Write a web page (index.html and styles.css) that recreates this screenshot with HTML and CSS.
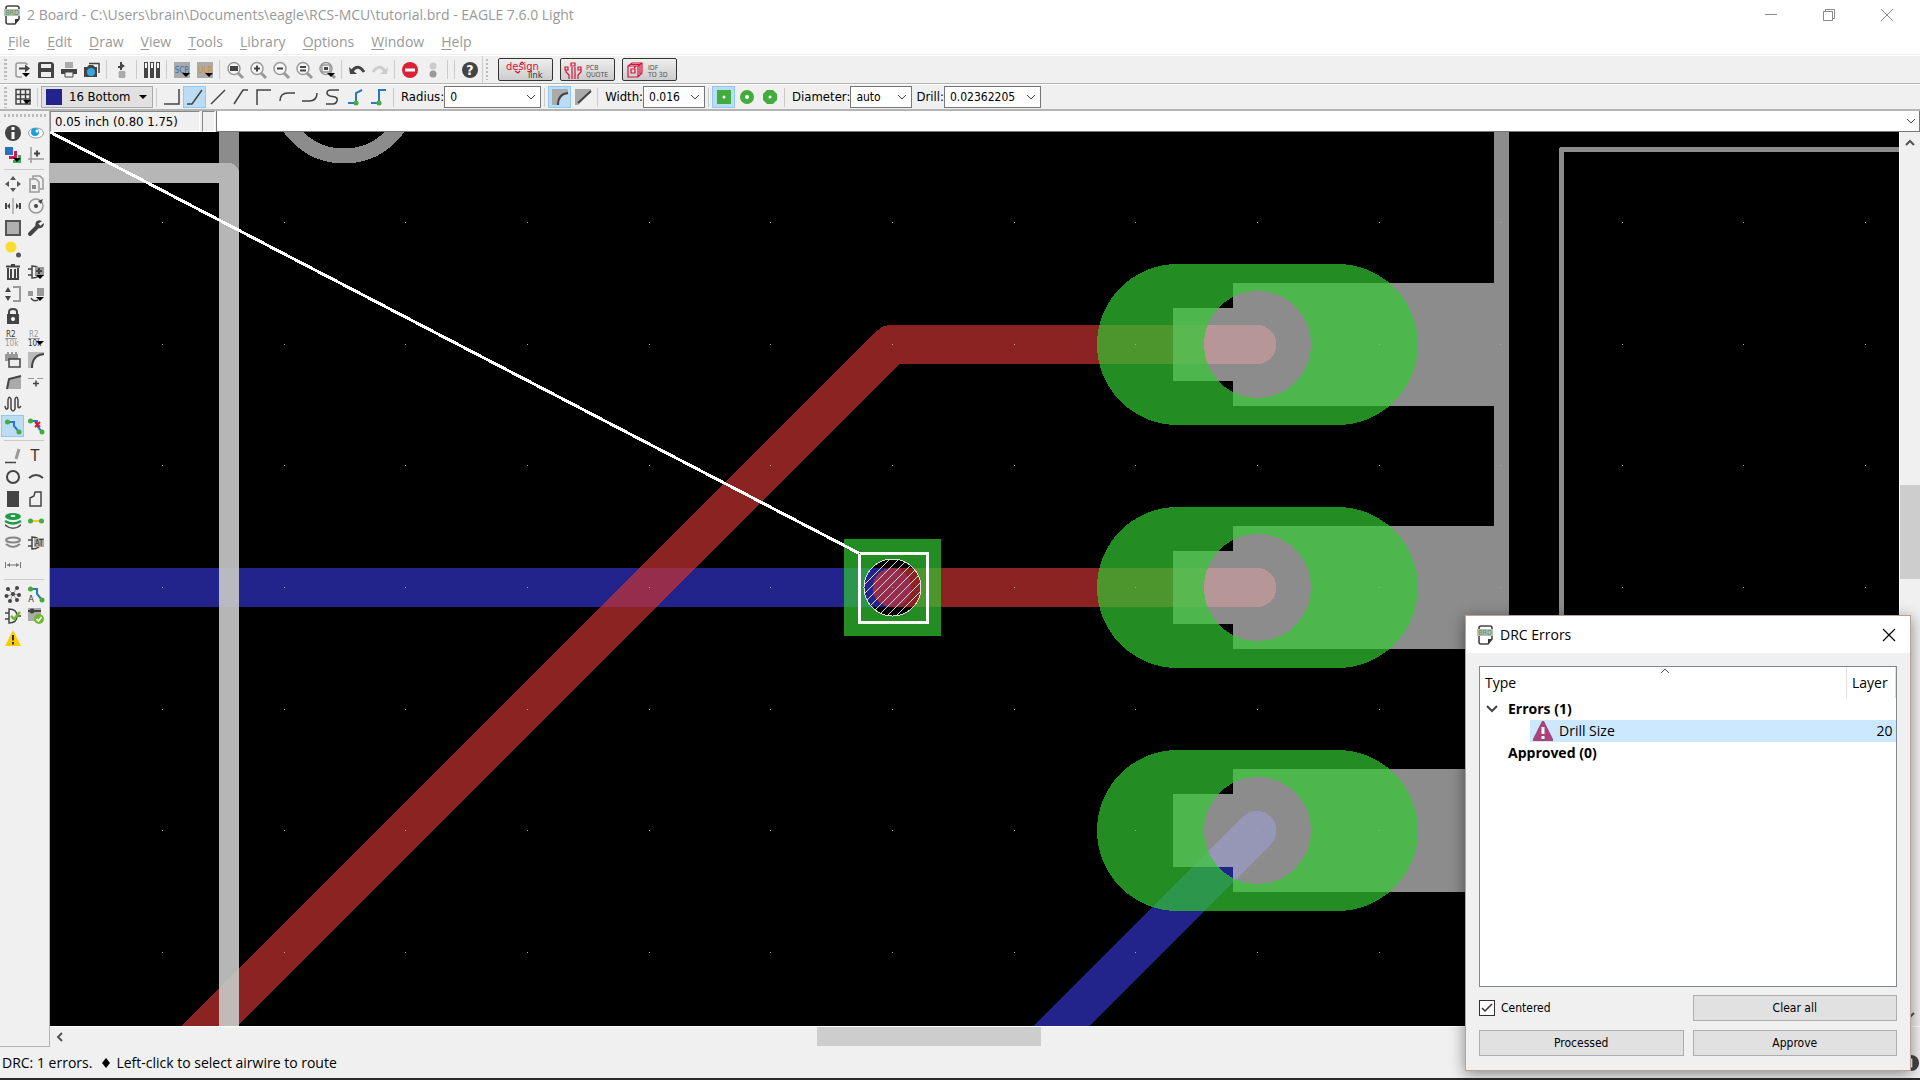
FILE: index.html
```html
<!DOCTYPE html>
<html lang="en">
<head>
<meta charset="utf-8">
<title>2 Board - EAGLE 7.6.0 Light</title>
<link rel="stylesheet" href="styles.css">
</head>
<body>
<header class="titlebar">
  <svg class="doc-icon" viewBox="0 0 16 20"><path d="M2 3Q2 1 4 1H13Q15 1 15 3V14L11 19H4Q2 19 2 17Z" fill="#fff" stroke="#444" stroke-width="1.600"/><path d="M15 14H11V19Z" fill="#333"/><path d="M0 4H16V11H0Z" fill="#bdbdbd"/><text x="8" y="10" class="t7 green-text">BRD</text></svg>
  <span class="title-text">2 Board - C:\Users\brain\Documents\eagle\RCS-MCU\tutorial.brd - EAGLE 7.6.0 Light</span>
  <div class="window-buttons">
    <button aria-label="Minimize"><svg viewBox="0 0 14 14"><path d="M1 6.500H13"/></svg></button>
    <button aria-label="Restore"><svg viewBox="0 0 14 14"><path d="M1.500 3.500H10.500V12.500H1.500ZM3.500 3V1.500H12.500V10.500H11"/></svg></button>
    <button aria-label="Close"><svg viewBox="0 0 14 14"><path d="M1 1L13 13M13 1L1 13"/></svg></button>
  </div>
</header>
<nav class="menubar">
  <a href="#"><u>F</u>ile</a><a href="#"><u>E</u>dit</a><a href="#"><u>D</u>raw</a><a href="#"><u>V</u>iew</a><a href="#"><u>T</u>ools</a><a href="#"><u>L</u>ibrary</a><a href="#"><u>O</u>ptions</a><a href="#"><u>W</u>indow</a><a href="#"><u>H</u>elp</a>
</nav>

<div class="toolbar main-tools">
  <i class="grip"></i>
  <button class="tool" aria-label="Open"><svg viewBox="0 0 20 20"><path d="M14 5Q14 3 12 3H5Q3 3 3 5V15Q3 17 5 17H9" class="thin lt"/><path d="M6 8.500H13" class="bold"/><path d="M12 4.500L17 8.500L12 12.500Z" class="dk"/><path d="M9 13H17L13 17Z"/></svg></button>
  <button class="tool" aria-label="Save"><svg viewBox="0 0 20 20"><path d="M2 4Q2 2 4 2H16L18 4V18H2Z" class="dk"/><path d="M5 4H15V8H5ZM5 12H15V17H5Z" fill="#eee"/></svg></button>
  <button class="tool" aria-label="Print"><svg viewBox="0 0 20 20"><path d="M6 2H14V8H6Z" fill="#aaa"/><path d="M2 9H18V14H2Z" class="dk"/><path d="M6 12H14V17H6Z" fill="#eee" stroke="#444"/></svg></button>
  <button class="tool" aria-label="Cam processor"><svg viewBox="0 0 20 20"><path d="M7 3.500H17V13" class="thin"/><path d="M2 7H5L7 5H11L13 7H15V17H2Z" class="dk"/><circle cx="9" cy="12" r="4" fill="#35a7e6"/></svg></button>
  <i class="sep"></i>
  <button class="tool" aria-label="Schematic"><svg viewBox="0 0 20 20"><path d="M8 2H10V4L13 6L10 8V10H8V8H6V6H8Z" class="dk"/><path d="M7 11H13V18H7Z" fill="#aaa"/><path d="M6 13H14M6 16H14" stroke="#aaa"/></svg></button>
  <i class="sep"></i>
  <button class="tool" aria-label="Library"><svg viewBox="0 0 20 20"><path d="M2 2H6V18H2ZM8 2H12V18H8ZM14 2H18V18H14Z" class="dk"/><path d="M4 3V8M10 3V8M16 3V8" stroke="#fff" stroke-width="2"/></svg></button>
  <i class="sep"></i>
  <button class="tool" aria-label="Script"><svg viewBox="0 0 20 20"><path d="M2 2H18V18H2Z" fill="#aaa"/><text x="10" y="13" class="t8 blue-text">SCR</text><path d="M10 13H18L14 17Z"/></svg></button>
  <button class="tool" aria-label="User language program"><svg viewBox="0 0 20 20"><path d="M2 2H18V18H2Z" fill="#aaa"/><text x="10" y="13" class="t8 orange-text">ULP</text><path d="M10 13H18L14 17Z"/></svg></button>
  <i class="sep"></i>
  <button class="tool" aria-label="Zoom fit"><svg viewBox="0 0 20 20"><path d="M13 13L18 18" class="handle"/><circle cx="9" cy="8.500" r="6" class="lens"/><path d="M5 6H13V11H5Z" class="dk"/></svg></button>
  <button class="tool" aria-label="Zoom in"><svg viewBox="0 0 20 20"><path d="M13 13L18 18" class="handle"/><circle cx="9" cy="8.500" r="6" class="lens"/><path d="M6 8.500H12M9 5.500V11.500" class="bold"/></svg></button>
  <button class="tool" aria-label="Zoom out"><svg viewBox="0 0 20 20"><path d="M13 13L18 18" class="handle"/><circle cx="9" cy="8.500" r="6" class="lens"/><path d="M6 8.500H12" class="bold"/></svg></button>
  <button class="tool" aria-label="Redraw"><svg viewBox="0 0 20 20"><path d="M13 13L18 18" class="handle"/><circle cx="9" cy="8.500" r="6" class="lens"/><path d="M6 7H12M6 10.500H12" class="bold"/></svg></button>
  <button class="tool" aria-label="Zoom select"><svg viewBox="0 0 20 20"><path d="M13 13L18 18" class="handle"/><circle cx="9" cy="8.500" r="6" class="lens"/><path d="M5 5H13V12H5Z" class="thin lt"/><path d="M7 7H11V10H7Z" class="dk"/><path d="M10 13H18L14 17Z"/></svg></button>
  <i class="sep"></i>
  <button class="tool" aria-label="Undo"><svg viewBox="0 0 20 20"><path d="M5 11Q11 3 17 12" fill="none" stroke="#444" stroke-width="3"/><path d="M2 7L3 14H10Z" class="dk"/></svg></button>
  <button class="tool" aria-label="Redo"><svg viewBox="0 0 20 20"><path d="M3 12Q9 3 15 11" fill="none" stroke="#ccc" stroke-width="3"/><path d="M18 7L17 14H10Z" fill="#ccc"/></svg></button>
  <i class="sep"></i>
  <button class="tool" aria-label="Stop"><svg viewBox="0 0 20 20"><circle cx="10" cy="10" r="8" fill="#dc2036"/><path d="M5 10H15" stroke="#fff" stroke-width="3"/></svg></button>
  <button class="tool" aria-label="Go"><svg viewBox="0 0 20 20"><circle cx="10" cy="6" r="3.500" fill="#ccc"/><circle cx="10" cy="14" r="3.500" fill="#999"/></svg></button>
  <i class="sep"></i><i class="sep"></i>
  <button class="tool" aria-label="Help"><svg viewBox="0 0 20 20"><circle cx="10" cy="10" r="8" class="dk"/><text x="10" y="15" class="help-mark">?</text></svg></button>
  <i class="sep edge"></i>
  <i class="grip short"></i>
  <button class="brand" aria-label="Design link"><svg viewBox="0 0 53 21"><text x="7" y="11" class="t11 red-text">design</text><text x="29" y="19" class="t9">link</text><path d="M16 12L19 14L21 12M21 5L23 3L25 5M32 14V11" class="red"/></svg></button>
  <button class="brand" aria-label="PCB quote"><svg viewBox="0 0 53 21"><path d="M8 20V16L5 13V11M11 20V8M14 20V8M17 20V16L20 13V11" class="red"/><path d="M4 8H7V11H4ZM10 4H14V7H10ZM17 8H20V11H17Z" class="red"/><text x="25" y="11" class="t7 label-text">PCB</text><text x="25" y="18" class="t7 label-text">QUOTE</text></svg></button>
  <button class="brand" aria-label="IDF to 3D"><svg viewBox="0 0 53 21"><path d="M5 7L9 4H19V14L15 18H5ZM5 7H15V18M15 7L19 4M7 5.500H17V16M8 10H12V14H8ZM11 9L13 7" class="red"/><text x="25" y="11" class="t7 label-text">IDF</text><text x="25" y="18" class="t7 label-text">TO 3D</text></svg></button>
</div>

<div class="toolbar params">
  <i class="grip"></i>
  <button class="tool" aria-label="Grid"><svg viewBox="0 0 20 20"><path d="M3 2.500H17V17H3ZM3 7.500H17M3 12H17M7.500 2V17M12.500 2V17" class="thin"/><path d="M10 13H18L14 17Z"/></svg></button>
  <i class="sep"></i>
  <div class="layer-box"><i class="swatch"></i><select aria-label="Layer"><option>16 Bottom</option></select></div>
  <i class="sep"></i>
  <button class="tool" aria-label="Bend 0"><svg viewBox="0 0 20 20"><path d="M2 17H17V2" class="thin"/></svg></button>
  <button class="tool on" aria-label="Bend 1"><svg viewBox="0 0 20 20"><path d="M2 17H7L17 3" class="thin"/></svg></button>
  <button class="tool" aria-label="Bend 2"><svg viewBox="0 0 20 20"><path d="M3 17L17 3" class="thin"/></svg></button>
  <button class="tool" aria-label="Bend 3"><svg viewBox="0 0 20 20"><path d="M3 17L12 3H17" class="thin"/></svg></button>
  <button class="tool" aria-label="Bend 4"><svg viewBox="0 0 20 20"><path d="M3 18V3H17" class="thin"/></svg></button>
  <button class="tool" aria-label="Bend 5"><svg viewBox="0 0 20 20"><path d="M3 14Q3 6 11 6H18" class="thin"/></svg></button>
  <button class="tool" aria-label="Bend 6"><svg viewBox="0 0 20 20"><path d="M2 14H9Q17 14 17 6" class="thin"/></svg></button>
  <button class="tool" aria-label="Freehand"><svg viewBox="0 0 20 20"><path d="M16 3H8Q4 3 4 6Q4 8 7 9L12 10Q15 11 14 14Q13 17 10 17H3" class="thin"/></svg></button>
  <button class="tool" aria-label="Follow-me partial"><svg viewBox="0 0 20 20"><path d="M2 16H10V6L16 3" class="bl"/><circle cx="10" cy="16" r="2.500" class="gn"/></svg></button>
  <button class="tool" aria-label="Follow-me"><svg viewBox="0 0 20 20"><path d="M2 16H10V3H17" class="bl"/><circle cx="10" cy="16" r="2.500" class="gn"/></svg></button>
  <i class="sep"></i>
  <label for="radius">Radius:</label><select id="radius" class="combo w97"><option>0</option></select>
  <i class="sep"></i>
  <button class="tool on" aria-label="Round miter"><svg viewBox="0 0 20 20"><path d="M2 2H18V7Q8 7 8 18H2Z" fill="#aaa"/><path d="M8 18Q8 7 18 6" class="bold"/></svg></button>
  <button class="tool" aria-label="Straight miter"><svg viewBox="0 0 20 20"><path d="M2 2H18V5L5 18H2Z" fill="#aaa"/><path d="M5 16L18 4" class="bold"/></svg></button>
  <i class="sep"></i>
  <label for="width">Width:</label><select id="width" class="combo w62"><option>0.016</option></select>
  <i class="sep"></i>
  <button class="tool on" aria-label="Square via"><svg viewBox="0 0 20 20"><path d="M3 3H17V17H3Z" class="gn"/><circle cx="10" cy="10" r="1.500" fill="#fff"/></svg></button>
  <button class="tool" aria-label="Round via"><svg viewBox="0 0 20 20"><circle cx="10" cy="10" r="7" class="gn"/><circle cx="10" cy="10" r="2" fill="#fff"/></svg></button>
  <button class="tool" aria-label="Octagon via"><svg viewBox="0 0 20 20"><path d="M7 3H13L17 7V13L13 17H7L3 13V7Z" class="gn"/><circle cx="10" cy="10" r="1.500" fill="#fff"/></svg></button>
  <i class="sep"></i>
  <label for="diameter">Diameter:</label><select id="diameter" class="combo w62"><option>auto</option></select>
  <label for="drill">Drill:</label><select id="drill" class="combo w97"><option>0.02362205</option></select>
</div>

<main class="workspace">
  <aside class="palette">
    <i class="grip-row"></i>
    <button class="tool" aria-label="Info"><svg viewBox="0 0 20 20"><circle cx="10" cy="10" r="8" class="dk"/><path d="M10 9V16M10 4V7" stroke="#fff" stroke-width="3"/></svg></button>
    <button class="tool" aria-label="Show"><svg viewBox="0 0 20 20"><ellipse cx="10" cy="10" rx="7.500" ry="5" fill="#fff" stroke="#999"/><circle cx="9" cy="9" r="4" fill="#1b9fe0"/><circle cx="11" cy="8" r="1.500" fill="#fff"/></svg></button>
    <button class="tool" aria-label="Display"><svg viewBox="0 0 20 20"><path d="M2 2H10V10H2Z" fill="#2b72bd"/><path d="M11 6H14V14H6V11H11Z" fill="#d4145a"/><path d="M15 10H18V18H10V15H15Z" fill="#3cab5a"/><path d="M10 13H18L14 17Z"/></svg></button>
    <button class="tool" aria-label="Mark"><svg viewBox="0 0 20 20"><path d="M5 2V18M2 14H18" stroke="#999" fill="none" stroke-width="1.500"/><path d="M8 8.500H14M11 5.500V11.500" class="bold"/></svg></button>
    <i class="rule"></i>
    <button class="tool" aria-label="Move"><svg viewBox="0 0 20 20"><path d="M10 2L13 6H7ZM10 18L13 14H7ZM2 10L6 7V13ZM18 10L14 7V13Z" fill="#555"/></svg></button>
    <button class="tool" aria-label="Copy"><svg viewBox="0 0 20 20"><path d="M7 5V2H14L17 5V15H14M4 5H10L13 8V18H4Z" class="thin lt"/><path d="M6 11H10V15H6Z" fill="#888"/></svg></button>
    <button class="tool" aria-label="Mirror"><svg viewBox="0 0 20 20"><path d="M10 2V18" stroke="#aaa" stroke-width="1.500"/><path d="M2 7H4V13H2ZM16 7H18V13H16ZM4 10L7 7V13ZM16 10L13 7V13Z" class="dk"/></svg></button>
    <button class="tool" aria-label="Rotate"><svg viewBox="0 0 20 20"><circle cx="10" cy="10" r="7" class="thin lt"/><circle cx="10" cy="10" r="2" class="dk"/><path d="M12 5L17 3L15 8Z" class="dk"/></svg></button>
    <button class="tool" aria-label="Group"><svg viewBox="0 0 20 20"><path d="M3 3H17V17H3Z" fill="#b0b0b0" stroke="#555" stroke-width="2"/></svg></button>
    <button class="tool" aria-label="Change"><svg viewBox="0 0 20 20"><path d="M4 16L12 8" stroke="#444" stroke-width="4" stroke-linecap="round"/><path d="M16 3L12 6L14 8L18 5Q18 11 12 10Q8 8 10 4Q12 1 16 3Z" class="dk"/></svg></button>
    <button class="tool" aria-label="Paste"><svg viewBox="0 0 20 20"><circle cx="8" cy="7" r="5.500" fill="#f9dc2c"/><circle cx="15.500" cy="15" r="2.500" fill="#555"/></svg></button>
    <span></span>
    <button class="tool" aria-label="Delete"><svg viewBox="0 0 20 20"><path d="M3 4.500H17M8 3H12M5 6V17H15V6M8 7V16M12 7V16" class="bold"/></svg></button>
    <button class="tool" aria-label="Add"><svg viewBox="0 0 20 20"><path d="M2 7H6M2 13H6M6 4Q14 4 14 10Q14 16 6 16Z" class="thin"/><path d="M9 5H18V14H9Z" fill="#999"/><path d="M10 9H16M13 6V12" class="bold"/><path d="M10 13H18L14 17Z"/></svg></button>
    <button class="tool" aria-label="Pinswap"><svg viewBox="0 0 20 20"><path d="M5 3L8 8H2ZM5 17L8 12H2Z" class="dk"/><path d="M10 3H17V17H10" stroke="#999" fill="none" stroke-width="2"/></svg></button>
    <button class="tool" aria-label="Replace"><svg viewBox="0 0 20 20"><path d="M2 7H7V12H2ZM11 4H18V12H11Z" fill="#999"/><path d="M5 14Q7 18 12 16" class="thin"/><path d="M10 13H18L14 17Z"/></svg></button>
    <button class="tool" aria-label="Lock"><svg viewBox="0 0 20 20"><path d="M6 9V6Q6 3 10 3Q14 3 14 6V9" class="bold"/><path d="M4 8H16V18H4Z" class="dk"/><circle cx="10" cy="13" r="2" fill="#fff"/></svg></button>
    <span></span>
    <button class="tool" aria-label="Name"><svg viewBox="0 0 20 20"><text x="3" y="9" class="t8 start">R2</text><path d="M2 10.500H14" stroke="#999"/><text x="2" y="18" class="t8 start gray-text">10k</text></svg></button>
    <button class="tool" aria-label="Value"><svg viewBox="0 0 20 20"><text x="3" y="9" class="t8 start gray-text">R2</text><path d="M2 10.500H14" stroke="#999"/><text x="2" y="18" class="t8 start">10k</text><path d="M10 13H18L14 17Z"/></svg></button>
    <button class="tool" aria-label="Smash"><svg viewBox="0 0 20 20"><path d="M2 4H15V11H2ZM4 2H6V4H4ZM8 2H10V4H8ZM12 2H14V4H12Z" fill="#999"/><path d="M6 9H17V17H6Z" fill="#eee" stroke="#444" stroke-width="1.500"/></svg></button>
    <button class="tool" aria-label="Miter"><svg viewBox="0 0 20 20"><path d="M2 2H18V5Q6 5 6 18H2Z" fill="#bbb"/><path d="M6 18Q6 5 18 4" class="bold"/></svg></button>
    <button class="tool" aria-label="Split"><svg viewBox="0 0 20 20"><path d="M4 17L6 7L18 4V17Z" fill="#aaa"/><path d="M4 17L6 7L18 4" class="bold"/></svg></button>
    <button class="tool" aria-label="Optimize"><svg viewBox="0 0 20 20"><path d="M2 6.500H8M11 6.500H17" stroke="#999"/><path d="M7 11.500H13M10 8.500V14.500" class="thin"/></svg></button>
    <button class="tool" aria-label="Meander"><svg viewBox="0 0 20 20"><path d="M2 12Q3 17 5 14V6Q6 1 8 5V15Q10 19 12 15V5Q14 1 15 6V13Q16 15 18 12" class="thin"/></svg></button>
    <span></span>
    <button class="tool on" aria-label="Route"><svg viewBox="0 0 20 20"><path d="M5 6H11V10L16 16" class="bl"/><circle cx="4.500" cy="6" r="2.500" class="gn"/><circle cx="16" cy="16" r="2.500" class="gn"/></svg></button>
    <button class="tool" aria-label="Ripup"><svg viewBox="0 0 20 20"><path d="M5 5H11V10L16 16" class="bl"/><circle cx="4.500" cy="5" r="2.500" class="gn"/><circle cx="16" cy="16" r="2.500" class="gn"/><path d="M9 6L14 11M14 6L9 11" stroke="#d4143c" stroke-width="2"/></svg></button>
    <i class="rule"></i>
    <button class="tool" aria-label="Wire"><svg viewBox="0 0 20 20"><path d="M2 17.500H13" class="thin"/><path d="M13 14L16 4" stroke="#999" stroke-width="3"/></svg></button>
    <button class="tool" aria-label="Text"><svg viewBox="0 0 20 20"><text x="9" y="16" class="text-mark">T</text></svg></button>
    <button class="tool" aria-label="Circle"><svg viewBox="0 0 20 20"><circle cx="10" cy="10" r="6" class="bold"/></svg></button>
    <button class="tool" aria-label="Arc"><svg viewBox="0 0 20 20"><path d="M3 11Q10 5 17 11" class="bold"/></svg></button>
    <button class="tool" aria-label="Rectangle"><svg viewBox="0 0 20 20"><path d="M4 2H16V18H4Z" class="dk"/></svg></button>
    <button class="tool" aria-label="Polygon"><svg viewBox="0 0 20 20"><path d="M4 17V9L8 7L9 3H15V17Z" class="thin"/></svg></button>
    <button class="tool" aria-label="Via"><svg viewBox="0 0 20 20"><path d="M2 13Q10 20 18 13V15Q10 21 2 15Z" fill="#555"/><path d="M2 10Q10 15 18 10" fill="none" stroke="#1f9a45" stroke-width="2.500"/><ellipse cx="10" cy="5.500" rx="8" ry="3.500" fill="#1f9a45"/><ellipse cx="10" cy="5" rx="2.500" ry="1" fill="#fff"/></svg></button>
    <button class="tool" aria-label="Signal"><svg viewBox="0 0 20 20"><path d="M4 10H16" stroke="#f3c91a" stroke-width="2"/><circle cx="4.500" cy="10" r="2.500" class="gn"/><circle cx="15.500" cy="10" r="2.500" class="gn"/></svg></button>
    <button class="tool" aria-label="Hole"><svg viewBox="0 0 20 20"><ellipse cx="10" cy="7" rx="7" ry="2.500" class="ring"/><path d="M3 11Q10 17 17 11" class="ring"/></svg></button>
    <button class="tool" aria-label="Attribute"><svg viewBox="0 0 20 20"><path d="M2 7H6M2 13H6M6 4Q14 4 14 10Q14 16 6 16Z" class="thin"/><path d="M8 5H18V14H8Z" fill="#aaa"/><text x="13" y="13" class="t8">AT</text></svg></button>
    <button class="tool" aria-label="Dimension"><svg viewBox="0 0 20 20"><path d="M2.500 7V13M17.500 7V13M4 10H16" stroke="#777"/><path d="M4 10L7 8V12ZM16 10L13 8V12Z" fill="#777"/></svg></button>
    <span></span>
    <i class="rule"></i>
    <button class="tool" aria-label="Ratsnest"><svg viewBox="0 0 20 20"><path d="M5 5L10 10L14 4M4 12L10 10L16 11M7 17L10 10L14 16" fill="none" stroke="#999"/><g class="dk"><circle cx="5" cy="5" r="2"/><circle cx="14" cy="4" r="2"/><circle cx="10" cy="10" r="2"/><circle cx="3.500" cy="12" r="2"/><circle cx="16" cy="11" r="2"/><circle cx="7" cy="17" r="2"/><circle cx="14" cy="16" r="2"/></g></svg></button>
    <button class="tool" aria-label="Autorouter"><svg viewBox="0 0 20 20"><path d="M5 5H11V10L16 16" class="bl"/><circle cx="4.500" cy="5" r="2.500" class="gn"/><circle cx="16" cy="16" r="2.500" class="gn"/><text x="5" y="18" class="t9">A</text></svg></button>
    <button class="tool" aria-label="Electrical check"><svg viewBox="0 0 20 20"><path d="M2 7H6M2 13H6M6 3Q14 3 14 10Q14 17 6 17ZM14 10H18" class="thin"/><path d="M8 10L11 13L17 6" fill="none" stroke="#6fb92c" stroke-width="2.500"/></svg></button>
    <button class="tool" aria-label="Design rules"><svg viewBox="0 0 20 20"><path d="M2 2H15V15H2Z" fill="#aaa"/><path d="M2 5H15" class="bold"/><circle cx="6" cy="5" r="2.500" class="dk"/><circle cx="13" cy="13" r="5" fill="#6fb92c"/><path d="M10.500 13L12.500 15L15.500 11" fill="none" stroke="#fff" stroke-width="1.500"/></svg></button>
    <button class="tool" aria-label="Errors"><svg viewBox="0 0 20 20"><path d="M10 2L18 18H2Z" fill="#fc0"/><path d="M10 7V12.500M10 14V16.500" stroke="#333" stroke-width="2"/></svg></button>
  </aside>

  <section class="editor">
    <div class="command-row">
      <output class="coords">0.05 inch (0.80 1.75)</output>
      <i class="coord-gap"></i>
      <input class="command" type="text" aria-label="Command line">
    </div>
    <div class="view">
      <svg class="board" role="img" aria-label="Board layout">
        <defs>
          <pattern id="hatch" width="9" height="9" patternUnits="userSpaceOnUse"><path d="M-1 10L10 -1M-1 1L1 -1M8 10L10 8" stroke="#ddd"/></pattern>
          <path id="pad" fill-rule="evenodd" d="M80.500 0H240.500A80.500 80.500 0 0 1 240.500 161H80.500A80.500 80.500 0 0 1 80.500 0ZM107 80.500A53.500 53.500 0 0 0 214 80.500A53.500 53.500 0 0 0 107 80.500Z"/>
        </defs>
        <g transform="translate(-50 -132)" shape-rendering="crispEdges">
          <path class="blue-track" d="M30 587.500H892"/>
          <path class="blue-track" d="M1257 830.500L1031 1056.500"/>
          <path class="red-track" d="M1257 344.500H891L160 1075.500"/>
          <path class="red-track" d="M892 587.500H1257"/>
          <circle class="outline" cx="344" cy="90" r="66" stroke-width="15"/>
          <path class="outline" stroke-width="20" d="M229 100V1900M30 173H229"/>
          <path class="outline" stroke-width="20" d="M30 173H229V1900"/>
          <path class="body" d="M1494 100H1509V1900H1494V892H1233V867H1173V794H1233V769H1494V649H1233V624H1173V551H1233V526H1494V406H1233V381H1173V308H1233V283H1494Z"/>
          <path class="outline" stroke-width="5" d="M3000 149.500H1561.500V1900"/>
          <g class="pads"><use href="#pad" x="1097" y="264"/><use href="#pad" x="1097" y="507"/><use href="#pad" x="1097" y="750"/>
          <path fill-rule="evenodd" d="M844 539H941V636H844ZM864 587.500A28.500 28.500 0 0 0 921 587.500A28.500 28.500 0 0 0 864 587.500Z"/></g>
          <circle cx="892.500" cy="587.500" r="28.500" fill="url(#hatch)" stroke="#ddd"/>
          <path class="marker" d="M50 132L859.500 553.500H927.500V622.500H859.500V553.500"/>
          <path class="grid-dots" d="M162 222.500H1899M162 344.500H1899M162 465.500H1899M162 587.500H1899M162 709.500H1899M162 830.500H1899M162 952.500H1899"/>
        </g>
      </svg>
      <div class="vscroll"><svg viewBox="0 0 12 12"><path d="M2 8L6 4L10 8"/></svg><i class="vthumb"></i><svg viewBox="0 0 12 12"><path d="M2 4L6 8L10 4"/></svg></div>
    </div>
    <div class="hscroll"><svg viewBox="0 0 12 12"><path d="M8 2L4 6L8 10"/></svg><i class="hthumb"></i></div>
  </section>
</main>
<footer class="status"><span>DRC: 1 errors.</span><svg viewBox="0 0 8 12" class="diamond"><path d="M4 1L8 6L4 11L0 6Z"/></svg><span>Left-click to select airwire to route</span><svg class="status-info" viewBox="0 0 20 20"><circle cx="10" cy="10" r="9" class="dk"/><path d="M10 5V15" stroke="#fff" stroke-width="3"/></svg></footer>

<section class="dialog" role="dialog" aria-labelledby="drc-title">
  <header class="dialog-title">
    <svg class="doc-icon" viewBox="0 0 16 20"><path d="M2 3Q2 1 4 1H13Q15 1 15 3V14L11 19H4Q2 19 2 17Z" fill="#fff" stroke="#444" stroke-width="1.600"/><path d="M15 14H11V19Z" fill="#333"/><path d="M0 4H16V11H0Z" fill="#bdbdbd"/><text x="8" y="10" class="t7 green-text">BRD</text></svg>
    <span id="drc-title">DRC Errors</span>
    <button class="dialog-close" aria-label="Close dialog"><svg viewBox="0 0 14 14"><path d="M1 1L13 13M13 1L1 13"/></svg></button>
  </header>
  <div class="dialog-body">
    <div class="list">
      <svg class="sort-mark" viewBox="0 0 10 6"><path d="M1 5L5 1L9 5"/></svg>
      <table>
        <thead><tr><th>Type</th><th class="layer">Layer</th></tr></thead>
        <tbody>
          <tr class="group"><td colspan="2"><span class="cell"><svg class="twisty" viewBox="0 0 12 12"><path d="M1 3L6 8L11 3"/></svg>Errors (1)</span></td></tr>
          <tr><td class="item"><span class="cell selected"><svg class="warn" viewBox="0 0 20 20"><path d="M9 0H11L20 18V20H0V18Z" fill="#a9447a"/><path d="M10 6V13M10 15V18" stroke="#fff" stroke-width="3"/></svg>Drill Size</span></td><td class="num">20</td></tr>
          <tr class="group"><td colspan="2"><span class="cell no-twisty">Approved (0)</span></td></tr>
        </tbody>
      </table>
    </div>
    <div class="actions">
      <label class="check"><input type="checkbox" checked>Centered</label>
      <button>Clear all</button>
      <button>Processed</button>
      <button>Approve</button>
    </div>
  </div>
</section>
</body>
</html>
```
FILE: styles.css
```css
* { box-sizing: border-box; }
body {
  margin: 0;
  height: 100vh;
  display: flex;
  flex-direction: column;
  overflow: hidden;
  background: #f0f0f0;
  color: #000;
  font: 14px/20px "Open Sans", "Noto Sans", sans-serif;
}
button, select, input { font: inherit; color: inherit; margin: 0; border-radius: 0; }
button { padding: 0; border: 0; background: none; }
svg { display: block; flex: none; }

.titlebar { display: flex; align-items: center; height: 29px; padding: 0 4px; background: #fff; color: #999; }
.doc-icon { width: 16px; height: 20px; margin-right: 7px; }
.title-text { flex: 1; white-space: nowrap; }
.window-buttons { display: flex; }
.window-buttons button { width: 58px; height: 28px; display: flex; align-items: center; justify-content: center; }
.window-buttons svg { width: 14px; height: 14px; fill: none; stroke: #888; }
.menubar { display: flex; gap: 17px; align-items: center; height: 26px; padding: 0 8px; background: #fff; border-bottom: 1px solid #eee; }
.menubar a { color: #999; text-decoration: none; }
u { text-underline-offset: 2px; }

.toolbar { display: flex; align-items: center; flex: none; border-top: 1px solid #fff; border-bottom: 1px solid #b4b4b4; font: 12px/20px "DejaVu Sans Condensed", "DejaVu Sans", sans-serif; }
.main-tools { height: 29px; }
.params { height: 27px; border-bottom-width: 2px; }
.grip { width: 3px; height: 21px; margin: 0 4px; background: repeating-linear-gradient(#bbb 0 2px, transparent 2px 4px); flex: none; }
.grip.short { margin: 0 10px 0 2px; width: 2px; }
.sep { width: 7px; height: 19px; flex: none; background: linear-gradient(#ccc, #ccc) center / 1px 100% no-repeat; }
.sep.edge { width: 3px; height: 27px; }
.tool { width: 23px; height: 22px; display: flex; align-items: center; justify-content: center; flex: none; }
.tool.on { background: #bcdcf4; border: 1px solid #90c8f6; }
.tool svg { width: 20px; height: 20px; }
.dk { fill: #444; }
.thin { fill: none; stroke: #444; stroke-width: 1.500; }
.bold { fill: none; stroke: #444; stroke-width: 2; }
.lt { stroke: #999; }
.bl { fill: none; stroke: #2b78c2; stroke-width: 2; }
.gn { fill: #42ac3c; }
.handle { stroke: #999; stroke-width: 3; }
.lens { fill: #f6f6f6; stroke: #999; stroke-width: 1.500; }
.ring { fill: none; stroke: #888; stroke-width: 2; }
.red { fill: none; stroke: #d4143c; stroke-width: 1.200; }
svg text { font-family: "DejaVu Sans Condensed", "DejaVu Sans", sans-serif; fill: #333; }
.t7 { font-size: 7px; text-anchor: middle; }
.t8 { font-size: 8px; text-anchor: middle; }
.t8.start { text-anchor: start; }
.t9 { font-size: 9px; text-anchor: middle; }
.t11 { font-size: 11px; }
svg .label-text { fill: #555; text-anchor: start; }
svg .green-text { fill: #3f9c3f; }
svg .blue-text { fill: #2b72bd; }
svg .orange-text { fill: #e08a20; }
svg .red-text { fill: #d4143c; }
svg .gray-text { fill: #999; }
.help-mark { font-size: 14px; font-weight: 700; text-anchor: middle; }
svg .help-mark { fill: #fff; }
.text-mark { font-size: 16px; text-anchor: middle; }
.brand { width: 55px; height: 23px; margin-right: 7px; border: 1px solid #333; border-radius: 2px; background: linear-gradient(#eee, #ccc); flex: none; }
.brand svg { width: 53px; height: 21px; }
.brand .t9 { text-anchor: start; }
.layer-box { display: flex; align-items: center; width: 112px; height: 22px; padding-left: 4px; border: 1px solid #aaa; background: #e1e1e1; flex: none; }
.swatch { width: 16px; height: 16px; background: #23238c; flex: none; }
.layer-box select { appearance: none; flex: 1; height: 20px; padding: 0 7px; border: 0; background: url("data:image/svg+xml,%3Csvg xmlns='http://www.w3.org/2000/svg' width='8' height='4'%3E%3Cpath d='M0 0H8L4 4Z'/%3E%3C/svg%3E") right 5px center no-repeat; font-size: 13px; }
.params label { flex: none; padding-left: 4px; font-size: 13px; }
.combo { appearance: none; height: 22px; padding: 0 5px; border: 1px solid #777; background: #fff url("data:image/svg+xml,%3Csvg xmlns='http://www.w3.org/2000/svg' width='10' height='6'%3E%3Cpath d='M1 1L5 5L9 1' fill='none' stroke='%23444'/%3E%3C/svg%3E") right 4px center no-repeat; flex: none; }
.w97 { width: 97px; }
.w62 { width: 62px; }

.workspace { display: flex; flex: 1; min-height: 0; }
.palette { width: 50px; flex: none; display: grid; grid-template-columns: 23px 23px; grid-auto-rows: max-content; align-content: start; padding: 3px 1px; border-right: 1px solid #b4b4b4; border-bottom: 1px solid #b4b4b4; }
.grip-row { grid-column: 1 / 3; height: 3px; margin: 0 0 5px 3px; background: repeating-linear-gradient(90deg, #bbb 0 2px, transparent 2px 4px); }
.rule { grid-column: 1 / 3; height: 7px; background: linear-gradient(#ccc, #ccc) center / 40px 1px no-repeat; }
.editor { flex: 1; min-width: 0; display: flex; flex-direction: column; }
.command-row { display: flex; height: 21px; flex: none; }
.coords { width: 150px; padding-left: 4px; border: 1px solid #888; border-right-color: #fff; border-bottom-color: #fff; font: 13px/19px "DejaVu Sans Condensed", "DejaVu Sans", sans-serif; flex: none; white-space: nowrap; }
.coord-gap { width: 13px; margin: 0 1px 0 2px; border: 1px solid #888; border-right-color: #fff; border-bottom-color: #fff; }
.command { flex: 1; min-width: 0; border: 1px solid #777; border-top-width: 0; background: #fff url("data:image/svg+xml,%3Csvg xmlns='http://www.w3.org/2000/svg' width='10' height='6'%3E%3Cpath d='M1 1L5 5L9 1' fill='none' stroke='%23444'/%3E%3C/svg%3E") right 3px center no-repeat; }
.view { display: flex; flex: 1; min-height: 0; }
.board { flex: 1; min-width: 0; height: 100%; background: #000; }
.blue-track, .red-track { fill: none; stroke-width: 39; stroke-linecap: round; stroke-linejoin: round; }
.blue-track { stroke: rgba(50, 50, 200, .7); }
.red-track { stroke: rgba(200, 50, 50, .7); }
.outline { fill: none; stroke: rgba(200, 200, 200, .7); stroke-linejoin: round; }
.body { fill: rgba(200, 200, 200, .7); }
.pads { fill: rgba(50, 200, 50, .7); }
.marker { fill: none; stroke: #fff; stroke-width: 3; }
.grid-dots { fill: none; stroke: #aaa; stroke-width: 1; stroke-dasharray: 1 120.650; }
.vscroll { width: 21px; display: flex; flex-direction: column; align-items: center; justify-content: space-between; padding: 5px 0; position: relative; border-left: 1px solid #fff; }
.vscroll svg, .hscroll svg { width: 12px; height: 12px; fill: none; stroke: #555; stroke-width: 2; }
.vthumb { position: absolute; top: 39.500%; left: 0; width: 100%; height: 10.500%; background: #cdcdcd; }
.hscroll { height: 21px; position: relative; display: flex; align-items: center; padding-left: 4px; border-top: 1px solid #fff; }
.hthumb { position: absolute; left: 41%; top: 0; width: 12%; height: 19px; background: #cdcdcd; }

.status { display: flex; align-items: center; height: 33px; flex: none; padding: 1px 0 0 2px; border-bottom: 2px solid #2b2b2b; white-space: nowrap; }
.diamond { width: 8px; height: 12px; margin: 0 6px 0 10px; }
.status-info { width: 18px; height: 18px; margin-left: auto; }

.dialog { position: absolute; right: 9px; bottom: 9px; width: 446px; height: 456px; display: flex; flex-direction: column; background: #f0f0f0; border: 1px solid #b9a394; box-shadow: 0 3px 14px rgba(0, 0, 0, .45); }
.dialog-title { display: flex; align-items: center; height: 37px; padding-left: 11px; background: #fff; }
.dialog-title span { flex: 1; }
.dialog-close { width: 42px; height: 36px; display: flex; align-items: center; justify-content: center; }
.dialog-close svg { width: 14px; height: 14px; fill: none; stroke: #000; stroke-width: 1.200; }
.dialog-body { flex: 1; display: flex; flex-direction: column; padding: 13px 13px 14px; min-height: 0; }
.list { position: relative; flex: 1; background: #fff; border: 1px solid #828790; }
.sort-mark { position: absolute; top: 1px; left: 180px; width: 10px; height: 6px; fill: none; stroke: #555; }
table { width: 100%; border-collapse: collapse; }
th { height: 31px; padding: 1px 5px 0; text-align: left; font-weight: 400; }
th.layer { width: 49px; border-left: 1px solid #e0e0e0; border-right: 1px solid #e0e0e0; }
td { height: 22px; padding: 0; }
.cell { display: flex; align-items: center; height: 22px; }
.group { font-weight: 700; }
.twisty { width: 12px; height: 12px; margin: 0 10px 0 6px; fill: none; stroke: #444; stroke-width: 2; }
.no-twisty { padding-left: 28px; }
.item { padding-left: 50px; }
.selected { padding-left: 3px; background: #cce8ff; }
.warn { width: 20px; height: 20px; margin-right: 6px; }
.num { padding-right: 3px; text-align: right; background: #cce8ff; }
.actions { display: grid; grid-template-columns: 1fr 1fr; gap: 9px; margin-top: 8px; font: 12px/20px "DejaVu Sans Condensed", "DejaVu Sans", sans-serif; }
.actions button { height: 26px; border: 1px solid #adadad; background: #e1e1e1; }
.check { display: flex; align-items: center; gap: 6px; }
.check input { appearance: none; width: 16px; height: 16px; border: 1px solid #333; background: #fff url("data:image/svg+xml,%3Csvg xmlns='http://www.w3.org/2000/svg' width='14' height='14'%3E%3Cpath d='M2 7L5 10L12 3' fill='none' stroke='%23333' stroke-width='1.500'/%3E%3C/svg%3E") center no-repeat; }
```
